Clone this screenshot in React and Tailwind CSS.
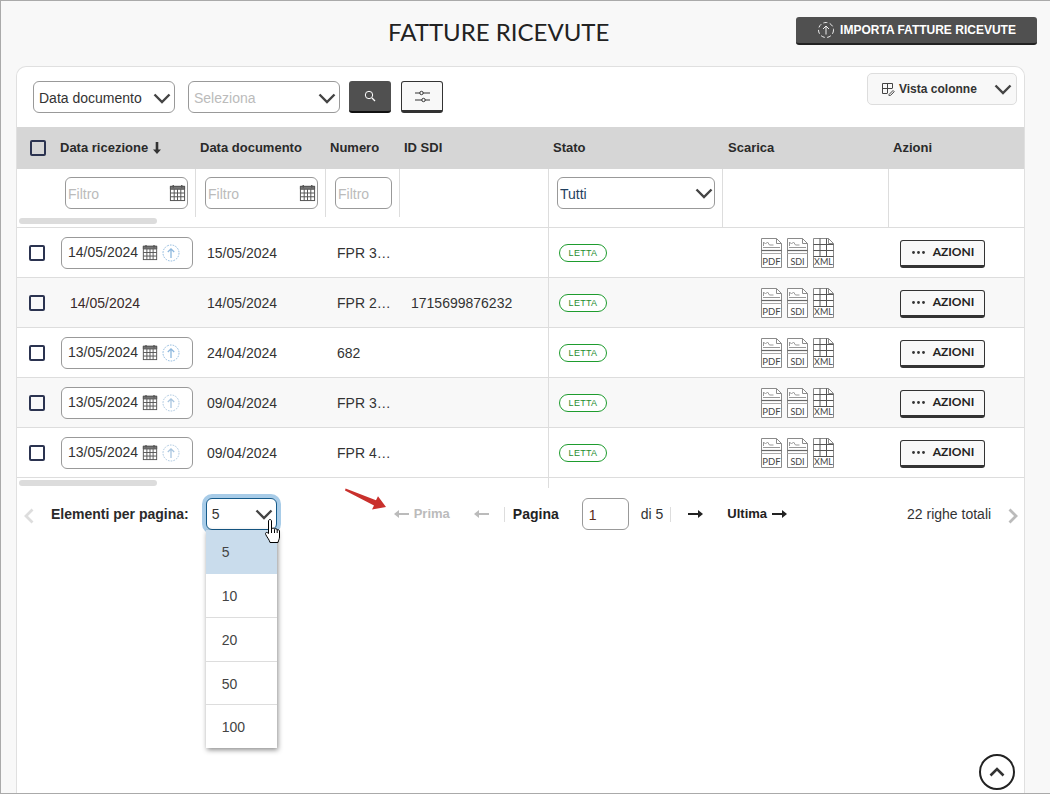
import React from "react";

const GRID = "grid grid-cols-[179px_130px_74px_149px_174px_166px_135px]";

const Chevron = ({ className = "" }) => (
  <svg width="18" height="11" viewBox="0 0 18 11" className={className} fill="none" stroke="#444" strokeWidth="2.4">
    <path d="M1.5 1.5 9 9l7.5-7.5" />
  </svg>
);

const Calendar = ({ w = 17, h = 18 }) => (
  <svg width={w} height={h} viewBox="0 0 18 19" fill="none" stroke="#555" strokeWidth="1.05">
    <rect x="1.5" y="2.5" width="15" height="15" fill="#fff" />
    <path d="M1.5 2.5h15v3h-15z" fill="#777" />
    <path d="M1.5 9.5h15M1.5 13.5h15M5.5 5.5v12M9 5.5v12M12.5 5.5v12" />
    <path d="M4.5 1v3M13.5 1v3" strokeWidth="1.5" />
  </svg>
);

const UploadCircle = ({ faded, color = "#8db8de" }) => (
  <svg width="18" height="18" viewBox="0 0 18 18" fill="none" stroke={faded ? "#a9c6e0" : color} strokeWidth="1">
    <circle cx="9" cy="9" r="8" strokeDasharray="1.6 1.2" />
    <path d="M9 14V5M5.8 8 9 4.8 12.2 8" strokeWidth="1.3" />
  </svg>
);

const Doc = ({ label, grid }) => (
  <svg width="21" height="30" viewBox="0 0 21 30" fill="none" stroke="#8a8a8a" strokeWidth="1">
    <path d="M.5.5h15l5 5v24H.5z" fill="#fff" />
    <path d="M15.5.5v5h5" />
    {grid ? (
      <path d="M.5 6.5h20M.5 12.5h20M.5 18.5h20M7 .5v18M13.5 .5v18" stroke="#555" />
    ) : (
      <>
        <path d="M2.5 8V4l2 2 2-2 2 3h4" stroke="#999" />
        <path d="M2 9.5h17" stroke="#999" />
        <path d="M.5 12.5h20" stroke="#666" strokeWidth="1.2" />
        <path d="M.5 15.5h20" stroke="#aaa" />
      </>
    )}
    <text x="10.5" y="27" textAnchor="middle" fontFamily="Lato, sans-serif" fontSize={label === "PDF" ? 9.5 : 9} fill="#444" stroke="none">
      {label}
    </text>
  </svg>
);

const Check = () => <div className="w-[16px] h-[16px] border-2 border-[#2b3350] rounded-[2px] bg-transparent shrink-0" />;

const ArrowH = ({ dir = "right", color = "#222" }) => (
  <svg width="15" height="8" viewBox="0 0 15 8" fill={color}>
    {dir === "right" ? <path d="M0 3h10V0l5 4-5 4V5H0z" /> : <path d="M15 3H5V0L0 4l5 4V5h10z" />}
  </svg>
);

const rows = [
  { ric: "14/05/2024", input: true, doc: "15/05/2024", num: "FPR 3…", sdi: "" },
  { ric: "14/05/2024", input: false, doc: "14/05/2024", num: "FPR 2…", sdi: "1715699876232" },
  { ric: "13/05/2024", input: true, doc: "24/04/2024", num: "682", sdi: "" },
  { ric: "13/05/2024", input: true, doc: "09/04/2024", num: "FPR 3…", sdi: "", faded: true },
  { ric: "13/05/2024", input: true, doc: "09/04/2024", num: "FPR 4…", sdi: "", faded: true },
];

const Header = ({ children, className = "" }) => (
  <div className={`flex items-center text-[13px] font-bold text-[#2a2a2a] ${className}`}>{children}</div>
);

const Filter = ({ w, cal }) => (
  <div className={`h-8 ${w} border border-[#999] rounded-[6px] bg-white flex items-center justify-between pl-[2px] pr-[1px] pt-[2px] text-sm text-[#bbb]`}>
    <span>Filtro</span>
    {cal && <span className="-mt-[2px] flex"><Calendar /></span>}
  </div>
);

export default function App() {
  return (
    <div className="w-[1050px] h-[794px] bg-[#f8f8f8] border-l border-t border-b border-[#aaa] overflow-hidden relative [font-family:Liberation_Sans,Arial,sans-serif] text-[#333]">
      <div className="h-[65px] pr-[13px] pt-[16px] relative flex justify-end">
        <h1 className="absolute left-[387px] top-[16px] [font-family:Lato,sans-serif] text-[24px] leading-[30px] text-[#222] whitespace-nowrap">FATTURE RICEVUTE</h1>
        <button className="w-[241px] h-[28px] bg-[#505050] rounded-[3px] border-b-2 border-[#222] flex items-center justify-center gap-[5px] text-white text-[12px] font-bold">
          <svg width="18" height="18" viewBox="0 0 18 18" fill="none" stroke="#eee" strokeWidth="1">
            <circle cx="9" cy="9" r="7.5" strokeDasharray="4 2.5" />
            <path d="M9 13.5V5M6 8l3-3 3 3" />
          </svg>
          IMPORTA FATTURE RICEVUTE
        </button>
      </div>

      <div className="ml-[15px] w-[1009px] h-[727px] bg-white border border-b-0 border-[#e0e0e0] rounded-t-[10px]">
        <div className="h-[60px] flex items-start pl-[16px] pr-[7px]">
          <div className="mt-[14px] w-[142px] h-[32px] border border-[#999] rounded-[6px] flex items-center justify-between pl-[5px] pr-[3px] pt-[2px] text-sm text-[#333]">
            Data documento <Chevron />
          </div>
          <div className="mt-[14px] ml-[13px] w-[152px] h-[32px] border border-[#999] rounded-[6px] flex items-center justify-between pl-[5px] pr-[3px] pt-[2px] text-sm text-[#bbb]">
            Seleziona <Chevron />
          </div>
          <button className="mt-[14px] ml-[9px] w-[42px] h-[32px] bg-[#505050] rounded-[3px] border-b-2 border-[#111] flex items-center justify-center">
            <svg width="12" height="12" viewBox="0 0 12 12" fill="none" stroke="#fff" strokeWidth="1">
              <circle cx="5" cy="5" r="3.7" />
              <path d="m8 8 3 3" strokeWidth="1.3" />
            </svg>
          </button>
          <button className="mt-[14px] ml-[10px] w-[42px] h-[32px] bg-[#f8f8f8] rounded-[3px] border border-[#333] border-b-[3px] flex items-center justify-center">
            <svg width="15" height="13" viewBox="0 0 15 13" fill="none" stroke="#333" strokeWidth="1">
              <path d="M0 3h5M8 3h7M0 10h7M10 10h5" />
              <circle cx="6.5" cy="3" r="1.7" />
              <circle cx="8.5" cy="10" r="1.7" />
            </svg>
          </button>
          <div className="ml-auto mt-[6px] w-[150px] h-[32px] border border-[#ddd] rounded-[5px] bg-[#f8f8f8] flex items-center pl-[13px] pr-[4px] text-[12px] font-bold text-[#333]">
            <svg width="14" height="14" viewBox="0 0 14 14" fill="none" stroke="#444" strokeWidth="1" className="mr-[4px]">
              <path d="M11.5 6V1.5h-10v10H6M1.5 6.5h10M6.5 1.5v10" />
              <path d="m8 12.5 4-4 1.2 1.2-4 4H8z" />
            </svg>
            Vista colonne
            <Chevron className="ml-auto" />
          </div>
        </div>

        <div className={`${GRID} h-[42px] bg-[#d6d6d6]`}>
          <Header className="pl-[13px] gap-[14px]">
            <Check />
            <span className="flex items-center gap-[5px]">
              Data ricezione
              <svg width="8" height="12" viewBox="0 0 8 12" fill="#333"><path d="M2.7 0h2.6v7.5H8L4 12 0 7.5h2.7z" /></svg>
            </span>
          </Header>
          <Header className="pl-[4px]">Data documento</Header>
          <Header className="pl-[4px]">Numero</Header>
          <Header className="pl-[4px]">ID SDI</Header>
          <Header className="pl-[4px]">Stato</Header>
          <Header className="pl-[5px]">Scarica</Header>
          <Header className="pl-[4px]">Azioni</Header>
        </div>

        <div className={`${GRID} h-[59px] border-b border-[#ddd] relative`}>
          <div className="h-[48px] border-r border-[#ddd] pl-[48px] pt-[8px]"><Filter w="w-[123px]" cal /></div>
          <div className="h-[48px] border-r border-[#ddd] pl-[9px] pt-[8px]"><Filter w="w-[113px]" cal /></div>
          <div className="h-[48px] border-r border-[#ddd] pl-[9px] pt-[8px]"><Filter w="w-[57px]" /></div>
          <div className="h-[48px] border-r border-[#ddd]" />
          <div className="border-l border-r border-[#ddd] -ml-px pl-[8px] pt-[8px]">
            <div className="h-8 w-[158px] border border-[#999] rounded-[6px] flex items-center justify-between pl-[2px] pr-[1px] text-sm text-[#1f3f5f]">
              <span className="pt-[2px]">Tutti</span> <Chevron />
            </div>
          </div>
          <div className="border-r border-[#ddd]" />
          <div />
          <div className="absolute left-[2px] bottom-[3px] w-[138px] h-[6px] rounded-full bg-[#dcdcdc]" />
        </div>

        {rows.map((r, i) => (
          <div key={i} className={`${GRID} h-[50px] border-b border-[#ddd] ${i % 2 ? "bg-[#f8f8f8]" : "bg-white"} text-sm text-[#333]`}>
            <div className="flex items-center pl-[12px]">
              <Check />
              {r.input ? (
                <div className="ml-[16px] w-[132px] h-[32px] border border-[#999] rounded-[6px] bg-white flex items-center pl-[6px] gap-[4px]">
                  <span className="-mt-[2px]">{r.ric}</span>
                  <Calendar w={16} h={17} />
                  <UploadCircle faded={r.faded} />
                </div>
              ) : (
                <span className="ml-[25px] text-[#3a2a2a]">{r.ric}</span>
              )}
            </div>
            <div className="flex items-center pl-[11px]">{r.doc}</div>
            <div className="flex items-center pl-[11px] whitespace-nowrap">{r.num}</div>
            <div className="flex items-center pl-[11px]">{r.sdi}</div>
            <div className="flex items-center pl-[10px] border-l border-[#ddd] -ml-px">
              <span className="h-[18px] w-[48px] rounded-full border border-[#1e9c2e] text-[#1e8c2e] text-[9px] tracking-[0.3px] pt-[1px] flex items-center justify-center bg-white">LETTA</span>
            </div>
            <div className="flex items-center pl-[38px] gap-[5px]">
              <Doc label="PDF" />
              <Doc label="SDI" />
              <Doc label="XML" grid />
            </div>
            <div className="flex items-center pl-[11px]">
              <button className="mt-[2px] w-[85px] h-[28px] bg-[#f8f8f8] border border-[#333] border-b-[3px] rounded-[3px] flex items-center justify-center gap-[8px] pl-[1px] pb-[1px] [font-family:Lato,sans-serif] text-[12px] font-bold text-[#222]">
                <svg width="13" height="3" viewBox="0 0 13 3" fill="#333"><circle cx="1.5" cy="1.5" r="1.4" /><circle cx="6.5" cy="1.5" r="1.4" /><circle cx="11.5" cy="1.5" r="1.4" /></svg>
                AZIONI
              </button>
            </div>
          </div>
        ))}

        <div className={`${GRID} h-[10px]`}>
          <div className="col-span-4 border-r border-[#ddd] pl-[2px] pt-[2px]">
            <div className="w-[138px] h-[6px] rounded-full bg-[#dcdcdc]" />
          </div>
        </div>

        <div className="h-[32px] mt-[10px] flex items-center relative text-sm">
          <svg width="10" height="16" viewBox="0 0 10 16" fill="none" stroke="#ddd" strokeWidth="2.8" className="ml-[7px] mt-[4px]"><path d="M8.5 1.5 2 8l6.5 6.5" /></svg>
          <span className="ml-[17px] font-bold text-[14px] text-[#2a2a2a] whitespace-nowrap">Elementi per pagina:</span>

          <div className="ml-[17px] w-[71px] h-[32px] rounded-[6px] border border-[#155a8a] ring-[4px] ring-[#a8cce8] bg-white flex items-center justify-between pl-[5px] pr-[3px] text-sm text-[#333] relative">
            5 <Chevron />
            <div className="absolute left-[-1px] top-[31px] w-[71px] bg-white shadow-[1px_2px_5px_rgba(0,0,0,0.45)] text-sm text-[#444] z-10">
              <div className="h-[44px] bg-[#c9dcec] flex items-center pl-[16px]">5</div>
              <div className="h-[44px] border-b border-[#ddd] pt-[1px] flex items-center pl-[16px]">10</div>
              <div className="h-[44px] border-b border-[#ddd] pt-[1px] flex items-center pl-[16px]">20</div>
              <div className="h-[43px] border-b border-[#ddd] pt-[1px] flex items-center pl-[16px]">50</div>
              <div className="h-[43px] flex items-center pl-[16px]">100</div>
            </div>
            <svg width="15" height="25" viewBox="0 0 15 25" className="absolute left-[58px] top-[20px] z-20" fill="#fff" stroke="#000" strokeWidth="1">
              <path d="M3.5 2c0-2 3-2 3 0v8c.6-1.4 3-1.2 3 .3.6-1 2.6-.8 2.7.7.8-.6 2.3-.2 2.3 1V18c0 2-1 3-1.5 5.5h-8C4.5 21 2.5 19 .7 15.5c-.9-1.8 1-3 2.8-1z" />
              <path d="M6.5 10v4M9.5 10.5V14M12.2 11v3" />
            </svg>
          </div>

          <svg width="42" height="22" viewBox="0 0 42 22" className="absolute left-[328px] top-[-10px]" fill="#c9302c">
            <path d="M.6.5 31 12.2l2-4L41 19l-14 2.4 2-4L0 2.4z" />
          </svg>

          <span className="ml-[117px]"><ArrowH dir="left" color="#bbb" /></span>
          <span className="ml-[5px] font-bold text-[13px] text-[#bbb]">Prima</span>
          <span className="ml-[24px]"><ArrowH dir="left" color="#bbb" /></span>
          <span className="ml-[15px] w-px h-[15px] bg-[#ddd]" />
          <span className="ml-[8px] font-bold text-[14px] text-[#222]">Pagina</span>
          <div className="ml-[23px] w-[47px] h-[32px] border border-[#999] rounded-[6px] flex items-center pl-[6px] pt-[1px] text-sm text-[#5a2a1a]">1</div>
          <span className="ml-[12px] text-[14px] text-[#333] whitespace-nowrap">di 5</span>
          <span className="ml-[7px] w-px h-[15px] bg-[#ddd]" />
          <span className="ml-[17px]"><ArrowH /></span>
          <span className="ml-[24px] font-bold text-[13px] text-[#222]">Ultima</span>
          <span className="ml-[5px]"><ArrowH /></span>
          <span className="ml-[120px] text-sm text-[#333] whitespace-nowrap">22 righe totali</span>
          <svg width="10" height="16" viewBox="0 0 10 16" fill="none" stroke="#bbb" strokeWidth="2.8" className="ml-[17px] mt-[4px]"><path d="M1.5 1.5 8 8l-6.5 6.5" /></svg>
        </div>
      </div>

      <button className="absolute left-[978px] top-[753px] w-[36px] h-[36px] rounded-full border-2 border-[#222] bg-white flex items-center justify-center">
        <svg width="16" height="10" viewBox="0 0 16 10" fill="none" stroke="#333" strokeWidth="2.6"><path d="M1.5 8.5 8 2l6.5 6.5" /></svg>
      </button>
    </div>
  );
}
